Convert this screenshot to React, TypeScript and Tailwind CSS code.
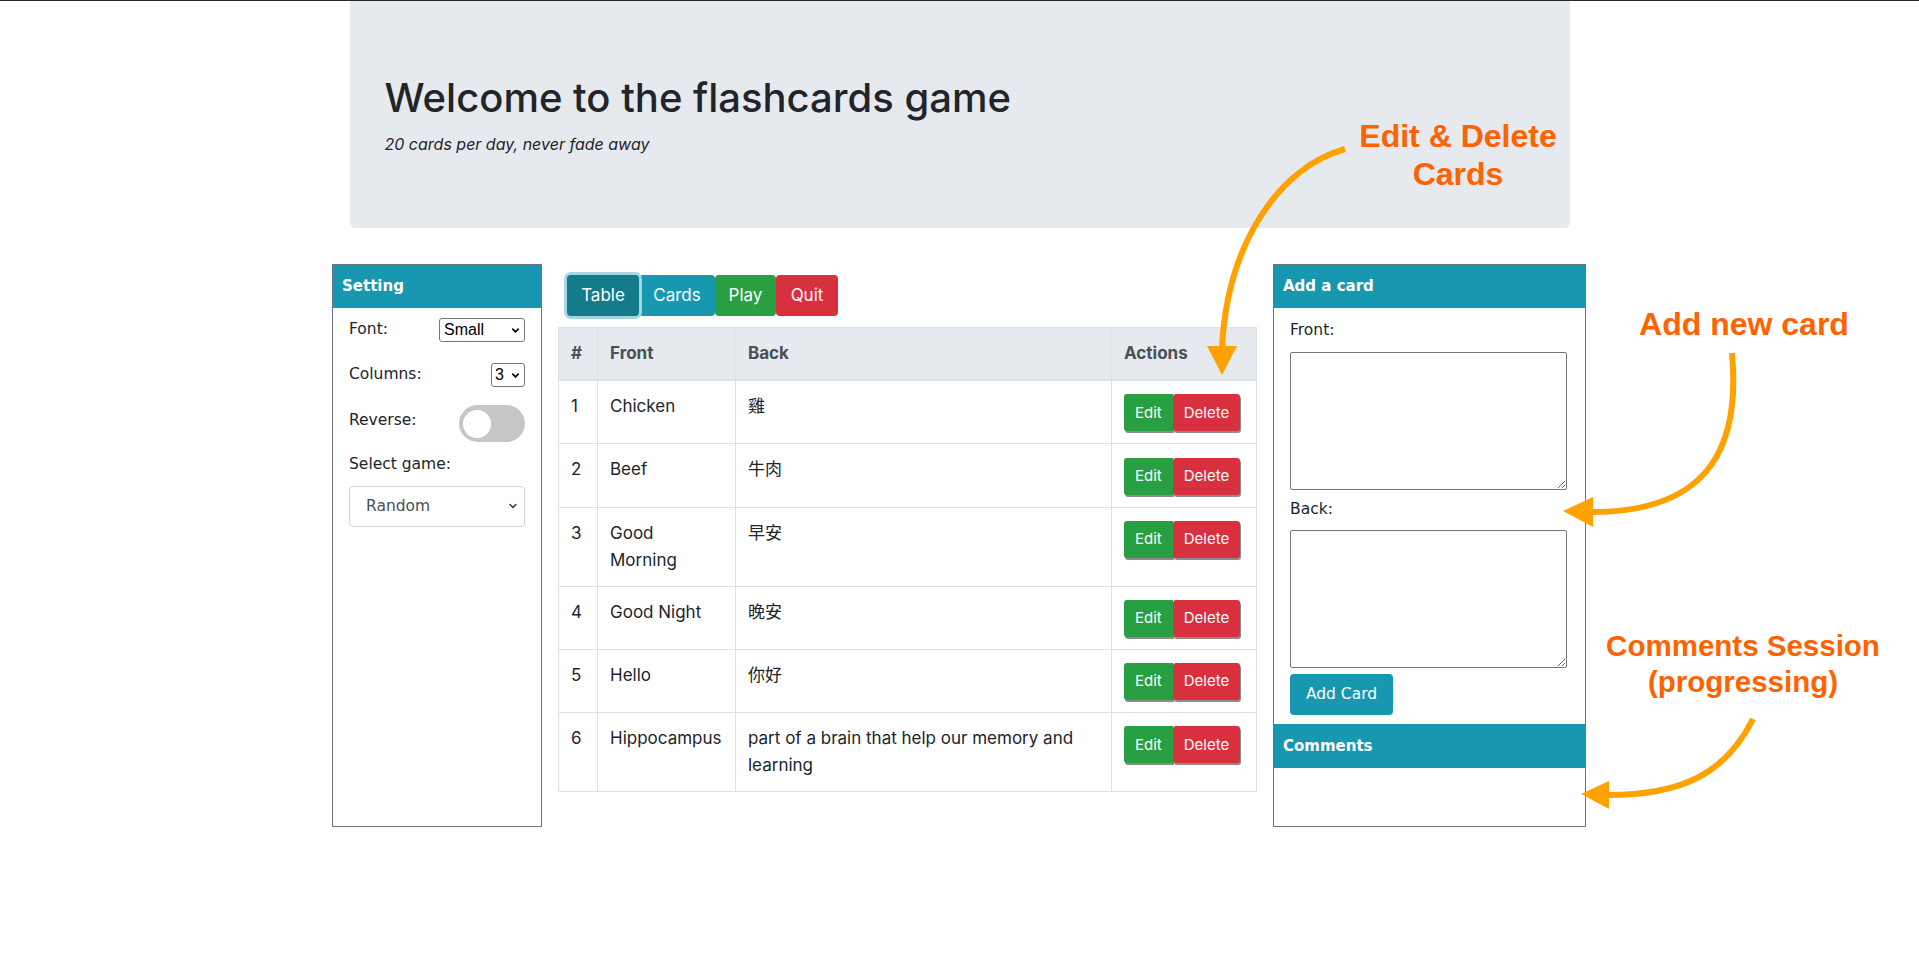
import { ChevronDown } from "lucide-react";

type Card = { front: string; back: string };

const cards: Card[] = [
  { front: "Chicken", back: "雞" },
  { front: "Beef", back: "牛肉" },
  { front: "Good Morning", back: "早安" },
  { front: "Good Night", back: "晚安" },
  { front: "Hello", back: "你好" },
  { front: "Hippocampus", back: "part of a brain that help our memory and learning" },
];

function PanelHeader({ title }: { title: string }) {
  return (
    <div className="flex h-[43px] items-center bg-[#1898b0] px-[9px] font-['DejaVu_Sans',sans-serif] text-[15px] font-bold text-white">
      {title}
    </div>
  );
}

function SettingPanel() {
  return (
    <aside className="h-[563px] w-[210px] shrink-0 border border-[#6c757d] font-['DejaVu_Sans',sans-serif] text-[15.5px] text-[#212529]">
      <PanelHeader title="Setting" />
      <div className="px-4">
        <div className="mt-[10px] flex h-6 items-center justify-between">
          <span>Font:</span>
          <div className="relative">
            <select className="block h-6 w-[86px] appearance-none rounded-[3px] border border-[#767676] bg-white pl-[4px] font-['Liberation_Sans',sans-serif] text-base leading-none text-black">
              <option>Small</option>
              <option>Medium</option>
              <option>Large</option>
            </select>
            <ChevronDown className="pointer-events-none absolute right-[4px] top-[7px] h-[11px] w-[11px] text-black" strokeWidth={3.5} />
          </div>
        </div>
        <div className="mt-[21px] flex h-6 items-center justify-between">
          <span>Columns:</span>
          <div className="relative">
            <select className="block h-6 w-[34px] appearance-none rounded-[3px] border border-[#767676] bg-white pl-[3px] font-['Liberation_Sans',sans-serif] text-base leading-none text-black">
              <option>3</option>
              <option>2</option>
              <option>1</option>
            </select>
            <ChevronDown className="pointer-events-none absolute right-[4px] top-[7px] h-[11px] w-[11px] text-black" strokeWidth={3.5} />
          </div>
        </div>
        <div className="mt-[18px] flex h-[37px] items-start justify-between">
          <span className="mt-[3px] leading-6">Reverse:</span>
          <div className="flex h-[37px] w-[66px] items-center rounded-full bg-[#c6c6c6] pl-[4px]">
            <div className="h-[28px] w-[28px] rounded-full bg-white" />
          </div>
        </div>
        <div className="mt-[10px] leading-6">Select game:</div>
        <div className="relative mt-[10px]">
          <select className="block h-[41px] w-full appearance-none rounded-[4px] border border-[#ced4da] bg-white pl-4 text-[15.5px] text-[#495057]">
            <option>Random</option>
            <option>In order</option>
          </select>
          <ChevronDown className="pointer-events-none absolute right-[6px] top-[14px] h-[12px] w-[12px] text-[#343a40]" strokeWidth={3} />
        </div>
      </div>
    </aside>
  );
}

function AddCardPanel() {
  return (
    <aside className="h-[563px] w-[313px] shrink-0 border border-[#6c757d] font-['DejaVu_Sans',sans-serif] text-[15.5px] text-[#212529]">
      <PanelHeader title="Add a card" />
      <div className="px-4">
        <div className="mt-[10px] leading-6">Front:</div>
        <textarea className="mt-[10px] block h-[138px] w-[277px] rounded-[2px] border border-[#767676]" />
        <div className="mt-[7px] leading-6">Back:</div>
        <textarea className="mt-[9px] block h-[138px] w-[277px] rounded-[2px] border border-[#767676]" />
        <button className="mt-[6px] h-[41px] w-[103px] rounded-[4px] bg-[#1898b0] text-[15.5px] text-white">
          Add Card
        </button>
      </div>
      <div className="mt-[9px] flex h-[44px] items-center bg-[#1898b0] px-[9px] text-[15px] font-bold text-white">
        Comments
      </div>
    </aside>
  );
}

function CardTable() {
  return (
    <table className="w-[698px] table-fixed border-collapse border border-[#dee2e6] text-[17px]">
      <thead className="bg-[#e6e9ed] text-[#495057]">
        <tr>
          <th className="w-[39px] border border-b-2 border-[#dee2e6] p-3 text-left font-bold leading-[27px]">#</th>
          <th className="w-[138px] border border-b-2 border-[#dee2e6] p-3 text-left font-bold leading-[27px]">Front</th>
          <th className="w-[376px] border border-b-2 border-[#dee2e6] p-3 text-left font-bold leading-[27px]">Back</th>
          <th className="w-[145px] border border-b-2 border-[#dee2e6] p-3 text-left font-bold leading-[27px]">Actions</th>
        </tr>
      </thead>
      <tbody>
        {cards.map((c, i) => (
          <tr key={i}>
            <td className="border border-[#dee2e6] p-3 align-top leading-[27px]">{i + 1}</td>
            <td className="border border-[#dee2e6] p-3 align-top leading-[27px]">{c.front}</td>
            <td className="border border-[#dee2e6] p-3 align-top leading-[27px]">{c.back}</td>
            <td className="border border-[#dee2e6] p-3 align-top">
              <div className="mt-[1.25px] flex">
                <button className="relative h-[37px] rounded-l-[3px] bg-[#279f42] px-[11px] text-[15px] text-white shadow-[1px_2px_0_rgba(0,0,0,0.45)]">
                  Edit
                </button>
                <button className="relative h-[37px] rounded-[3px] bg-[#d8303f] px-[11px] text-[15px] text-white shadow-[1px_2px_0_rgba(0,0,0,0.45)]">
                  Delete
                </button>
              </div>
            </td>
          </tr>
        ))}
      </tbody>
    </table>
  );
}

function Annotations() {
  return (
    <>
      <div className="pointer-events-none absolute left-[1328px] top-[117px] w-[260px] text-center font-['Liberation_Sans',Arial,sans-serif] text-[32px] font-bold leading-[38px] text-[#ff6200]">
        Edit &amp; Delete
        <br />
        Cards
      </div>
      <div className="pointer-events-none absolute left-[1614px] top-[305px] w-[260px] text-center font-['Liberation_Sans',Arial,sans-serif] text-[32px] font-bold leading-[38px] text-[#ff6200]">
        Add new card
      </div>
      <div className="pointer-events-none absolute left-[1593px] top-[628px] w-[300px] text-center font-['Liberation_Sans',Arial,sans-serif] text-[29.5px] font-bold leading-[36px] text-[#ff6200]">
        Comments Session
        <br />
        (progressing)
      </div>
      <svg className="pointer-events-none absolute left-0 top-0" width="1919" height="970" viewBox="0 0 1919 970">
        <g fill="none" stroke="#ffa200" strokeWidth="6">
          <path d="M1345 149 C1278 168 1227 245 1222 348" />
          <path d="M1732 353 C1740 440 1715 512 1592 512" />
          <path d="M1753 719 C1725 775 1680 795 1608 795" />
        </g>
        <g fill="#ffa200">
          <polygon points="1207,346 1237,346 1222,375" />
          <polygon points="1593,497 1593,527 1563,511" />
          <polygon points="1609,781 1609,809 1581,794" />
        </g>
      </svg>
    </>
  );
}

export default function App() {
  return (
    <div className="relative min-h-[970px] w-full overflow-hidden bg-white font-[Inter,'Noto_Sans_CJK_TC',sans-serif] text-[#212529]">
      <div className="h-px bg-[#2a2a2a]" />
      <header className="mx-auto h-[227px] w-[1220px] rounded-b-[5px] bg-[#e6e9ee] px-[35px] pt-[73px]">
        <h1 className="text-[40px] font-medium leading-[48px]">Welcome to the flashcards game</h1>
        <p className="mt-[10px] text-base italic leading-6">20 cards per day, never fade away</p>
      </header>

      <div className="mx-auto mt-[36px] flex w-[1255px] items-start">
        <SettingPanel />
        <main className="w-[731px] shrink-0 px-4 pt-[11px]">
          <div className="ml-[9px] flex">
            <button className="relative z-10 h-[41px] w-[72px] rounded-[4px] bg-[#147b8d] text-[17px] text-white ring-[3px] ring-[#a3d8e2]">
              Table
            </button>
            <button className="h-[41px] w-[76px] rounded-[4px] bg-[#1898b0] text-[17px] text-white">Cards</button>
            <button className="h-[41px] w-[61px] rounded-[4px] bg-[#279f42] text-[17px] text-white">Play</button>
            <button className="h-[41px] w-[62px] rounded-[4px] bg-[#d8303f] text-[17px] text-white">Quit</button>
          </div>
          <div className="mt-[11px]">
            <CardTable />
          </div>
        </main>
        <AddCardPanel />
      </div>

      <Annotations />
    </div>
  );
}
